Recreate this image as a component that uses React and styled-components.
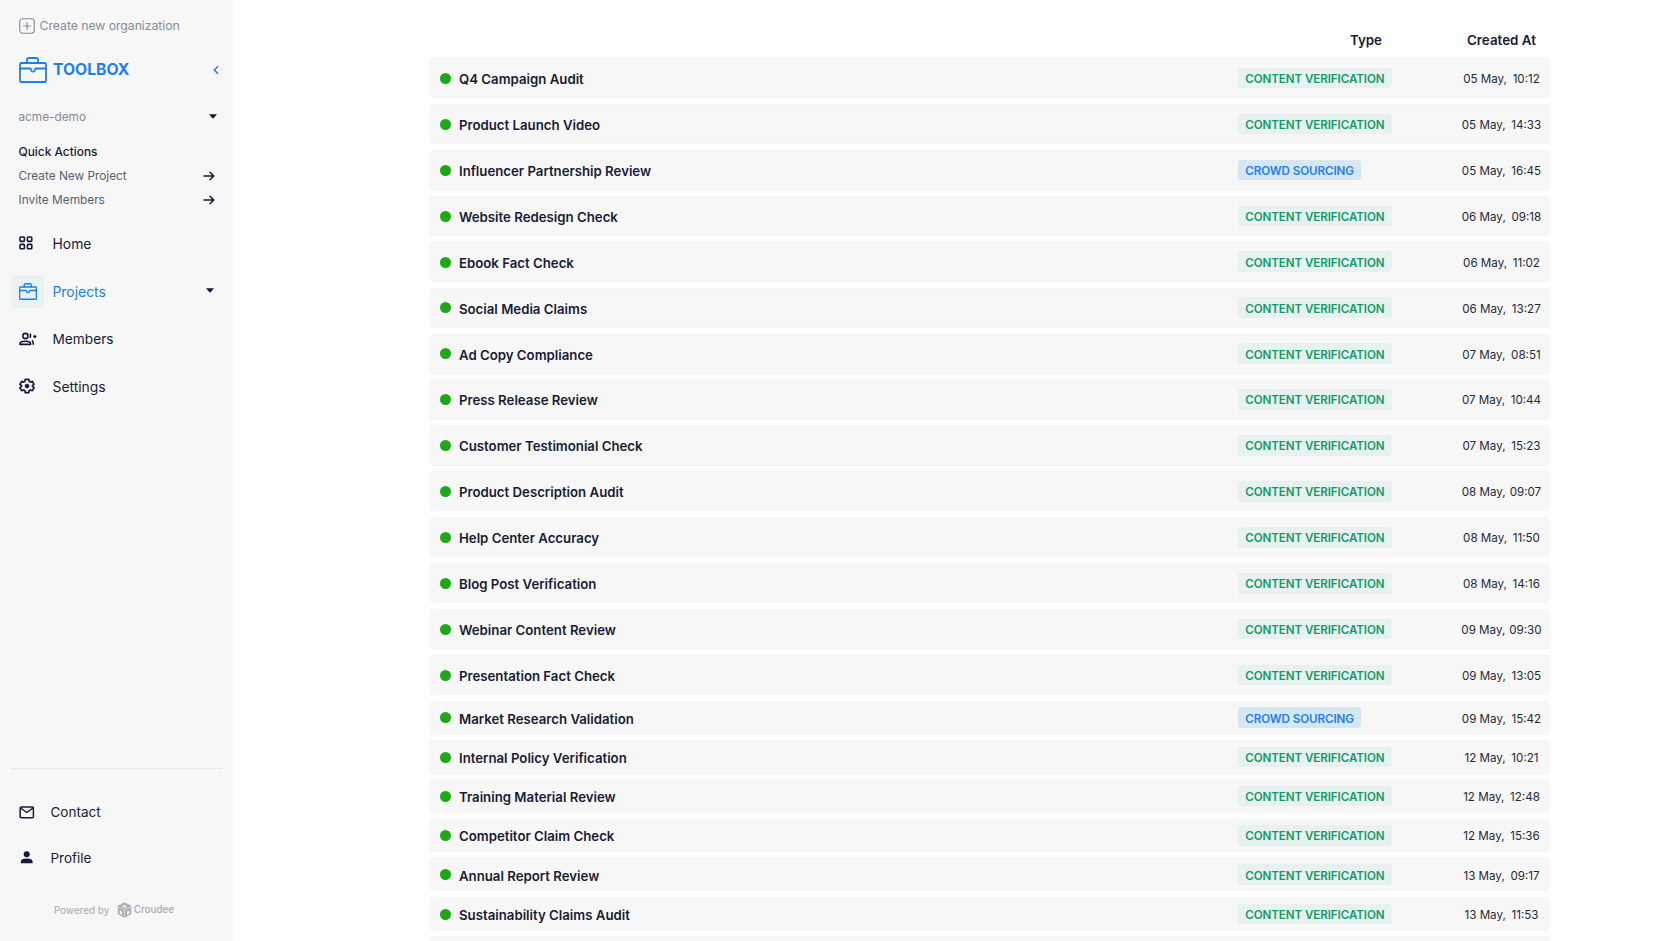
import React from 'react';
import styled, { createGlobalStyle } from 'styled-components';

const GlobalStyle = createGlobalStyle`
  * { box-sizing: border-box; }
  html, body { margin: 0; height: 941px; overflow: hidden; background: #fefefe; }
  body { font-family: Inter, sans-serif; color: #171c38; }
`;

const Page = styled.div`
  display: flex;
  width: 1672px;
  height: 941px;
  overflow: hidden;
`;

const Sidebar = styled.aside`
  flex: none;
  width: 233.4px;
  height: 941px;
  background: #f7f7f7;
  display: flex;
  flex-direction: column;
`;

const Label = styled.span`
  font-size: ${p => p.$size}px;
  font-weight: ${p => p.$weight || 400};
  letter-spacing: ${p => p.$track || 0}px;
  color: ${p => p.$color || 'inherit'};
  white-space: nowrap;
  line-height: 20px;
`;

const NewOrg = styled.div`
  display: flex;
  align-items: center;
  gap: 4.6px;
  height: 20px;
  margin: 16px 0 0 19px;
`;

const Brand = styled.div`
  display: flex;
  align-items: center;
  height: 28px;
  margin: 20px 14px 0 19px;
  svg:first-child { margin-bottom: 1px; }
  svg:last-child { margin-left: auto; }
`;

const BrandName = styled(Label)`
  margin-left: 6px;
`;

const OrgPicker = styled.div`
  display: flex;
  align-items: center;
  justify-content: space-between;
  height: 20px;
  margin: 23px 16px 0 18.5px;
  svg { margin-bottom: 1px; }
`;

const QuickActions = styled.div`
  display: flex;
  flex-direction: column;
  gap: 4px;
  margin: 15px 18.4px 0 18.5px;
`;

const QuickRow = styled.div`
  display: flex;
  align-items: center;
  justify-content: space-between;
  height: 20px;
`;

const Nav = styled.nav`
  display: flex;
  flex-direction: column;
  gap: 13.4px;
  margin: 17px 19.6px 0 11px;
`;

const NavItem = styled.div`
  display: flex;
  align-items: center;
  height: 34px;
  gap: 8.5px;
  color: ${p => (p.$active ? '#1c7ff0' : '#171c38')};
  > svg { margin: 0 0 2px auto; }
  > span:last-of-type { padding-top: 0.7px; }
`;

const IconBox = styled.span`
  width: 33px;
  height: 33px;
  border-radius: 4px;
  display: flex;
  align-items: center;
  padding-left: ${p => p.$inset}px;
  padding-bottom: ${p => p.$lift || 0}px;
  background: ${p => (p.$active ? '#eaf2f1' : 'transparent')};
`;

const Footer = styled.div`
  margin-top: auto;
  height: 173.5px;
  margin-left: 11px;
  width: 211px;
  border-top: 1px solid #deeeea;
  display: flex;
  flex-direction: column;
  padding-top: 33.5px;
`;

const FooterItem = styled.div`
  display: flex;
  align-items: center;
  height: 20px;
  margin-bottom: 25.5px;
  padding-left: 8px;
  gap: 15.5px;
`;

const Powered = styled.div`
  display: flex;
  align-items: center;
  height: 20px;
  padding-left: 43px;
  margin-top: 7.4px;
  svg { margin: 0 2px 0 7.6px; }
`;

const Content = styled.main`
  flex: none;
  width: 1120px;
  margin-left: 196.6px;
  padding-top: 30px;
`;

const columns = '808px 216px 96px';

const TableHead = styled.div`
  display: grid;
  grid-template-columns: ${columns};
  height: 28px;
`;

const HeadCell = styled(Label)`
  padding-left: ${p => p.$indent}px;
`;

const Row = styled.div`
  display: grid;
  grid-template-columns: ${columns};
  align-items: center;
  height: ${p => (p.$compact ? 33.6 : 40.2)}px;
  margin-bottom: ${p => (p.$compact ? 5.65 : 5.74)}px;
  border-radius: 4px;
  background: #f7f7f7;
  box-shadow: inset 0 0 0 0.5px #f3f4f4;
`;

const NameCell = styled.div`
  display: flex;
  align-items: center;
  gap: 8.1px;
  padding-left: 9.9px;
  ${Label} { padding-top: 1.8px; }
`;

const StatusDot = styled.span`
  width: 11px;
  height: 11px;
  margin-top: 0.6px;
  border-radius: 50%;
  background: #1da916;
`;

const Tag = styled.span`
  justify-self: start;
  height: 20.6px;
  line-height: 20px;
  padding: 1.2px 7.3px 0;
  border-radius: 3px;
  font-size: 11.6px;
  font-weight: 600;
  letter-spacing: -0.08px;
  white-space: nowrap;
  color: ${p => (p.$crowd ? '#1c7ff0' : '#119a6a')};
  background: ${p => (p.$crowd ? '#d5e7f0' : '#e7f1ef')};
`;

const DateCell = styled.div`
  display: flex;
  justify-content: center;
  padding: 1.8px 1px 0 0;
  color: #23283f;
  gap: ${p => p.$gap}px;
`;

const CaretDown = () => (
  <svg width="8" height="5" viewBox="0 0 8 5"><path d="M.6.3h6.8q.6 0 .2.5L4.500 4.200q-.5.5-1 0L.4.8Q0 .3.6.3Z" fill="#14193a" /></svg>
);

const ArrowRight = () => (
  <svg width="12" height="10" viewBox="0 0 12 10" fill="none" stroke="#14193a" strokeWidth="1.5" strokeLinecap="round" strokeLinejoin="round"><path d="M1 5h9.600M7 1.200 10.800 5 7 8.800" /></svg>
);

const Toolbox = ({ w, h, stroke }) => (
  <svg width={w} height={h} viewBox="0 0 28 26" fill="none" stroke="#1c7ff0" strokeWidth={stroke} strokeLinejoin="round" strokeLinecap="round">
    <rect x="1" y="6" width="26" height="19" rx="1.300" />
    <path d="M8 6V3q0-2 2-2h7q2 0 2 2v3M1 11.500h10.500l.8 2.300q.3.8 1.100.8h1.200q.8 0 1.100-.8l.8-2.300H27" />
  </svg>
);

const PlusBox = () => (
  <svg width="16" height="16" viewBox="0 0 16 16" fill="none" stroke="#858b9b" strokeWidth="1.1" strokeLinecap="round"><rect x=".7" y=".7" width="14.600" height="14.600" rx="3" /><path d="M8 4.600v6.800M4.600 8h6.800" /></svg>
);

const HomeIcon = () => (
  <svg width="14" height="14" viewBox="0 0 14 14" fill="none" stroke="#14193a" strokeWidth="1.6">
    <rect x="1" y="1" width="4.400" height="4.400" rx=".8" /><rect x="8.400" y="1" width="4.400" height="4.400" rx=".8" />
    <rect x="1" y="8.400" width="4.400" height="4.400" rx=".8" /><rect x="8.400" y="8.400" width="4.400" height="4.400" rx=".8" />
  </svg>
);

const MembersIcon = () => (
  <svg width="18" height="14" viewBox="0 0 18 14" fill="none" stroke="#14193a" strokeWidth="1.600" strokeLinecap="round" strokeLinejoin="round">
    <circle cx="6.400" cy="4" r="2.600" />
    <path d="M1 12.400v-.7q0-2.500 5.300-2.500t5.300 2.500v.7Z" />
    <path d="M11.200 2.200q.9 1.600 0 3.200M13.400 8.800q.9 1.200.9 3.500" />
    <path d="m15.800 2.700 1.900 1.900-1.900 1.900-1.900-1.900Z" fill="#14193a" stroke="none" />
  </svg>
);

const GearIcon = () => (
  <svg width="16" height="16" viewBox="0 0 24 24" fill="none" stroke="#14193a" strokeWidth="2.500" strokeLinejoin="round">
    <path d="m9.300 2-.6 3.100-1.800 1L4 5 1.400 9.600l2.400 2v1l-2.400 2L4 19l2.900-1.100 1.800 1 .6 3.100h5.400l.6-3.100 1.800-1L20 19l2.600-4.400-2.400-2v-1l2.400-2L20 5l-2.900 1.100-1.800-1L14.700 2Z" />
    <circle cx="12" cy="12" r="2.800" fill="#14193a" strokeWidth="1.500" />
  </svg>
);

const MailIcon = () => (
  <svg width="16" height="13" viewBox="0 0 16 13" fill="none" stroke="#14193a" strokeWidth="1.500" strokeLinejoin="round"><rect x="1.200" y="1" width="13.200" height="10.800" rx="1" /><path d="m1.600 2 6.200 4.500L14 2" /></svg>
);

const PersonIcon = () => (
  <svg width="16" height="13" viewBox="0 0 16 13" fill="#14193a"><circle cx="7.700" cy="3.200" r="3" /><path d="M1.800 12.200v-1.400q0-3.300 5.900-3.300t5.900 3.300v1.400Z" /></svg>
);

const CroudeeMark = () => (
  <svg width="15" height="16" viewBox="0 0 15 16">
    <path d="m7.500.3 6.800 3.400v8.200l-6.800 4L.7 11.900V3.700Z" fill="#a9b0b7" />
    <path d="M7.500 8.400v7M.9 4.600l6.600 3.600 6.600-3.600" stroke="#dde1e4" strokeWidth=".8" fill="none" />
    <path d="m2.600 8.600 2.400 1.200v3.100l-2.400-1.300ZM12.400 8.600 10 9.800v3.100l2.400-1.300Z" fill="#f1f3f4" />
    <path d="m7.500 2.400 2.400 1.300v1.400l-2.400 1.300-2.400-1.300V3.700Z" fill="#d6dadd" />
  </svg>
);

const projects = [
  ['Q4 Campaign Audit', '05 May,', '10:12'],
  ['Product Launch Video', '05 May,', '14:33'],
  ['Influencer Partnership Review', '05 May,', '16:45', true],
  ['Website Redesign Check', '06 May,', '09:18'],
  ['Ebook Fact Check', '06 May,', '11:02'],
  ['Social Media Claims', '06 May,', '13:27'],
  ['Ad Copy Compliance', '07 May,', '08:51'],
  ['Press Release Review', '07 May,', '10:44'],
  ['Customer Testimonial Check', '07 May,', '15:23'],
  ['Product Description Audit', '08 May,', '09:07'],
  ['Help Center Accuracy', '08 May,', '11:50'],
  ['Blog Post Verification', '08 May,', '14:16'],
  ['Webinar Content Review', '09 May,', '09:30'],
  ['Presentation Fact Check', '09 May,', '13:05'],
  ['Market Research Validation', '09 May,', '15:42', true],
  ['Internal Policy Verification', '12 May,', '10:21'],
  ['Training Material Review', '12 May,', '12:48'],
  ['Competitor Claim Check', '12 May,', '15:36'],
  ['Annual Report Review', '13 May,', '09:17'],
  ['Sustainability Claims Audit', '13 May,', '11:53'],
];

const tightTimes = ['09:07', '09:30'];

export default function App() {
  return (
    <>
      <GlobalStyle />
      <Page>
        <Sidebar>
          <NewOrg><PlusBox /><Label $size={12.3} $track={-0.07} $color="#858b9b">Create new organization</Label></NewOrg>
          <Brand>
            <Toolbox w={28} h={26} stroke={1.8} />
            <BrandName $size={15.7} $weight={700} $color="#1c7ff0">TOOLBOX</BrandName>
            <svg width="6" height="10" viewBox="0 0 6 10" fill="none" stroke="#1c7ff0" strokeWidth="1.5"><path d="M5 1.300 1.300 5 5 8.700" /></svg>
          </Brand>
          <OrgPicker><Label $size={11.8} $color="#858b9b">acme-demo</Label><CaretDown /></OrgPicker>
          <QuickActions>
            <QuickRow><Label $size={11.9} $weight={500}>Quick Actions</Label></QuickRow>
            <QuickRow><Label $size={11.8} $color="#596072">Create New Project</Label><ArrowRight /></QuickRow>
            <QuickRow><Label $size={11.85} $color="#596072">Invite Members</Label><ArrowRight /></QuickRow>
          </QuickActions>
          <Nav>
            <NavItem><IconBox $inset={8} $lift={2}><HomeIcon /></IconBox><Label $size={13.9}>Home</Label></NavItem>
            <NavItem $active><IconBox $active $inset={7.5}><Toolbox w={18} h={17} stroke={2.1} /></IconBox><Label $size={13.9}>Projects</Label><CaretDown /></NavItem>
            <NavItem><IconBox $inset={7.8}><MembersIcon /></IconBox><Label $size={13.7}>Members</Label></NavItem>
            <NavItem><IconBox $inset={8} $lift={1}><GearIcon /></IconBox><Label $size={13.9}>Settings</Label></NavItem>
          </Nav>
          <Footer>
            <FooterItem><MailIcon /><Label $size={13.5}>Contact</Label></FooterItem>
            <FooterItem><PersonIcon /><Label $size={13.5}>Profile</Label></FooterItem>
            <Powered>
              <Label $size={9.9} $color="#a3abb6">Powered by</Label>
              <CroudeeMark />
              <Label $size={9.8} $weight={500} $color="#a3abb6">Croudee</Label>
            </Powered>
          </Footer>
        </Sidebar>
        <Content>
          <TableHead>
            <span />
            <HeadCell $size={13.3} $weight={600} $indent={112}>Type</HeadCell>
            <HeadCell $size={13.4} $weight={600} $indent={13}>Created At</HeadCell>
          </TableHead>
          {projects.map(([name, date, time, crowd], i) => (
            <Row key={name} $compact={i > 13}>
              <NameCell><StatusDot /><Label $size={13.23} $weight={600}>{name}</Label></NameCell>
              <Tag $crowd={crowd}>{crowd ? 'CROWD SOURCING' : 'CONTENT VERIFICATION'}</Tag>
              <DateCell $gap={tightTimes.includes(time) ? 4 : 5.7}>
                <Label $size={11.6}>{date}</Label>
                <Label $size={11.6}>{time}</Label>
              </DateCell>
            </Row>
          ))}
          <Row $compact />
        </Content>
      </Page>
    </>
  );
}
